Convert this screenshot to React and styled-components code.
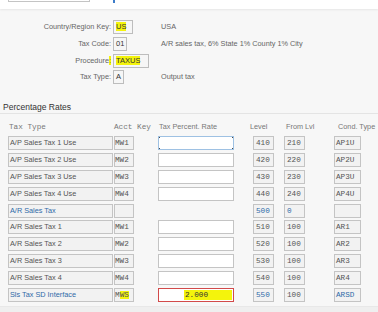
import React from "react"
import styled, { createGlobalStyle, css } from "styled-components"

const GlobalStyle = createGlobalStyle`
  * { box-sizing: border-box; }
  body {
    margin: 0;
    background: #f7f7f7;
    font-family: "Liberation Sans", Arial, sans-serif;
  }
`

const mono = `"Liberation Mono", "DejaVu Sans Mono", monospace`
const blue = `#2f6aa8`

const Page = styled.div`
  display: flex;
  flex-direction: column;
  width: 378px;
  height: 312px;
  overflow: hidden;
  background: #f7f7f7;
  color: #555;
`

const TopBar = styled.div`
  flex: none;
  height: 9px;
  background: #fff;
  display: flex;
  align-items: flex-start;
  box-shadow: 0 1px 2px rgba(0, 0, 0, 0.07);
`

const TopField = styled.div`
  margin: -12px 0 0 8px;
  width: 82px;
  height: 14px;
  border: 1px solid #c4c4c4;
  background: #fff;
`

const TopLink = styled.span`
  margin-left: 23px;
  width: 1.5px;
  height: 3px;
  background: #3d7cc9;
`

const Form = styled.div`
  display: grid;
  grid-template-columns: 111px 50px 1fr;
  grid-auto-rows: 14px;
  row-gap: 2.8px;
  padding-top: 11px;
  font-size: 7.3px;
`

const Label = styled.div`
  text-align: right;
  line-height: 14px;
  color: #666;
  white-space: nowrap;
`

const FieldBox = styled.div`
  margin-left: 2px;
  width: ${p => p.w}px;
  height: 14px;
  border: 1px solid #bdbdbd;
  background: #f6f6f6;
  color: #333;
  font-size: 7.5px;
  line-height: 12px;
  padding-left: 2px;
  white-space: nowrap;
`

const Desc = styled.div`
  line-height: 14px;
  color: #666;
  white-space: nowrap;
`

const Mark = styled.span`
  background: #f4f40c;
`

const SectionTitle = styled.div`
  margin-top: 17px;
  padding: 0 3px;
  height: 13px;
  line-height: 12px;
  font-size: 8.5px;
  color: #333;
  border-bottom: 1px solid #e4e4e4;
`

const Table = styled.div`
  display: flex;
  flex-direction: column;
  gap: 2.8px;
  margin-top: 5.2px;
  padding-left: 8px;
`

const Footer = styled.div`
  flex: 1;
  margin-top: 4px;
  background: #efefef;
  border-top: 1px solid #e8e8e8;
`

const Row = styled.div`
  display: flex;
  height: 14px;
`

const HeadCell = styled.div`
  width: ${p => p.w}px;
  margin-left: ${p => p.ml || 0}px;
  padding-left: ${p => p.pad || 0}px;
  line-height: 14px;
  white-space: nowrap;
  color: #777;
  font-size: ${p => (p.mono ? "7.7px" : "7.3px")};
  font-family: ${p => (p.mono ? mono : "inherit")};
`

const Cell = styled.div`
  width: ${p => p.w}px;
  margin-left: ${p => p.ml || 0}px;
  padding-left: ${p => p.pad || 0}px;
  height: 14px;
  border: 1px solid #c4c4c4;
  background: #f2f2f2;
  line-height: 12px;
  white-space: nowrap;
  overflow: hidden;
  color: ${p => (p.link ? blue : "#555")};
  font-size: ${p => (p.mono ? "7.7px" : "7.3px")};
  font-family: ${p => (p.mono ? mono : "inherit")};
`

const corner = "linear-gradient(#4a4a4a, #4a4a4a)"

const RateBox = styled.div`
  display: flex;
  width: 76px;
  margin-left: 24px;
  height: 14px;
  border: 1px solid #c4c4c4;
  background: #fff;
  padding: 1px 1px 1px 25px;
  ${p => p.focus && css`
    border-color: #9ec1e3;
    background:
      ${corner} left top / 2px 2px no-repeat,
      ${corner} right top / 2px 2px no-repeat,
      ${corner} left bottom / 2px 2px no-repeat,
      ${corner} right bottom / 2px 2px no-repeat,
      #fff;
    background-origin: border-box;
  `}
  ${p => p.error && css`
    border-color: #d24a4a;
  `}
`

const RateSpacer = styled.div`
  width: 76px;
  margin-left: 24px;
`

const RateMark = styled.div`
  flex: 1;
  background: #f4f40c;
  color: #333;
  font-family: ${mono};
  font-size: 7.7px;
  line-height: 10px;
  padding-left: 1px;
`

const rows = [
  { type: "A/P Sales Tax 1 Use", key: "MW1", level: "410", from: "210", cond: "AP1U", focus: true },
  { type: "A/P Sales Tax 2 Use", key: "MW2", level: "420", from: "220", cond: "AP2U" },
  { type: "A/P Sales Tax 3 Use", key: "MW3", level: "430", from: "230", cond: "AP3U" },
  { type: "A/P Sales Tax 4 Use", key: "MW4", level: "440", from: "240", cond: "AP4U" },
  { type: "A/R Sales Tax", key: "", level: "500", from: "0", cond: "", header: true },
  { type: "A/R Sales Tax 1", key: "MW1", level: "510", from: "100", cond: "AR1" },
  { type: "A/R Sales Tax 2", key: "MW2", level: "520", from: "100", cond: "AR2" },
  { type: "A/R Sales Tax 3", key: "MW3", level: "530", from: "100", cond: "AR3" },
  { type: "A/R Sales Tax 4", key: "MW4", level: "540", from: "100", cond: "AR4" },
  { type: "Sls Tax SD Interface", key: "MWS", level: "550", from: "100", cond: "ARSD", rate: "2.000", sd: true },
]

function RateRow({ r }) {
  return (
    <Row>
      <Cell w={105} pad={1} link={r.header || r.sd}>{r.type}</Cell>
      <Cell w={20} ml={1} mono>
        {r.sd ? <>M<Mark>WS</Mark></> : r.key}
      </Cell>
      {r.header ? (
        <RateSpacer />
      ) : (
        <RateBox focus={r.focus} error={r.sd}>
          {r.rate && <RateMark>{r.rate}</RateMark>}
        </RateBox>
      )}
      <Cell w={21} ml={19} pad={2} mono link={r.header || r.sd}>{r.level}</Cell>
      <Cell w={21} ml={10} pad={2} mono link={r.header}>{r.from}</Cell>
      <Cell w={27} ml={29} pad={1} mono link={r.sd}>{r.cond}</Cell>
    </Row>
  )
}

export default function App() {
  return (
    <Page>
      <GlobalStyle />
      <TopBar>
        <TopField />
        <TopLink />
      </TopBar>

      <Form>
        <Label>Country/Region Key:</Label>
        <FieldBox w={20}><Mark>US</Mark></FieldBox>
        <Desc>USA</Desc>

        <Label>Tax Code:</Label>
        <FieldBox w={14}>01</FieldBox>
        <Desc>A/R sales tax, 6% State 1% County 1% City</Desc>

        <Label>Procedure<Mark>:</Mark></Label>
        <FieldBox w={36}><Mark>TAXUS</Mark></FieldBox>
        <Desc />

        <Label>Tax Type:</Label>
        <FieldBox w={11}>A</FieldBox>
        <Desc>Output tax</Desc>
      </Form>

      <SectionTitle>Percentage Rates</SectionTitle>

      <Table>
        <Row>
          <HeadCell w={105} pad={1} mono>Tax Type</HeadCell>
          <HeadCell w={20} ml={1} mono>Acct Key</HeadCell>
          <HeadCell w={76} ml={24} pad={1}>Tax Percent. Rate</HeadCell>
          <HeadCell w={21} ml={16}>Level</HeadCell>
          <HeadCell w={21} ml={15}>From Lvl</HeadCell>
          <HeadCell w={27} ml={29} pad={2}>Cond. Type</HeadCell>
        </Row>
        {rows.map(r => <RateRow key={r.type} r={r} />)}
      </Table>

      <Footer />
    </Page>
  )
}
